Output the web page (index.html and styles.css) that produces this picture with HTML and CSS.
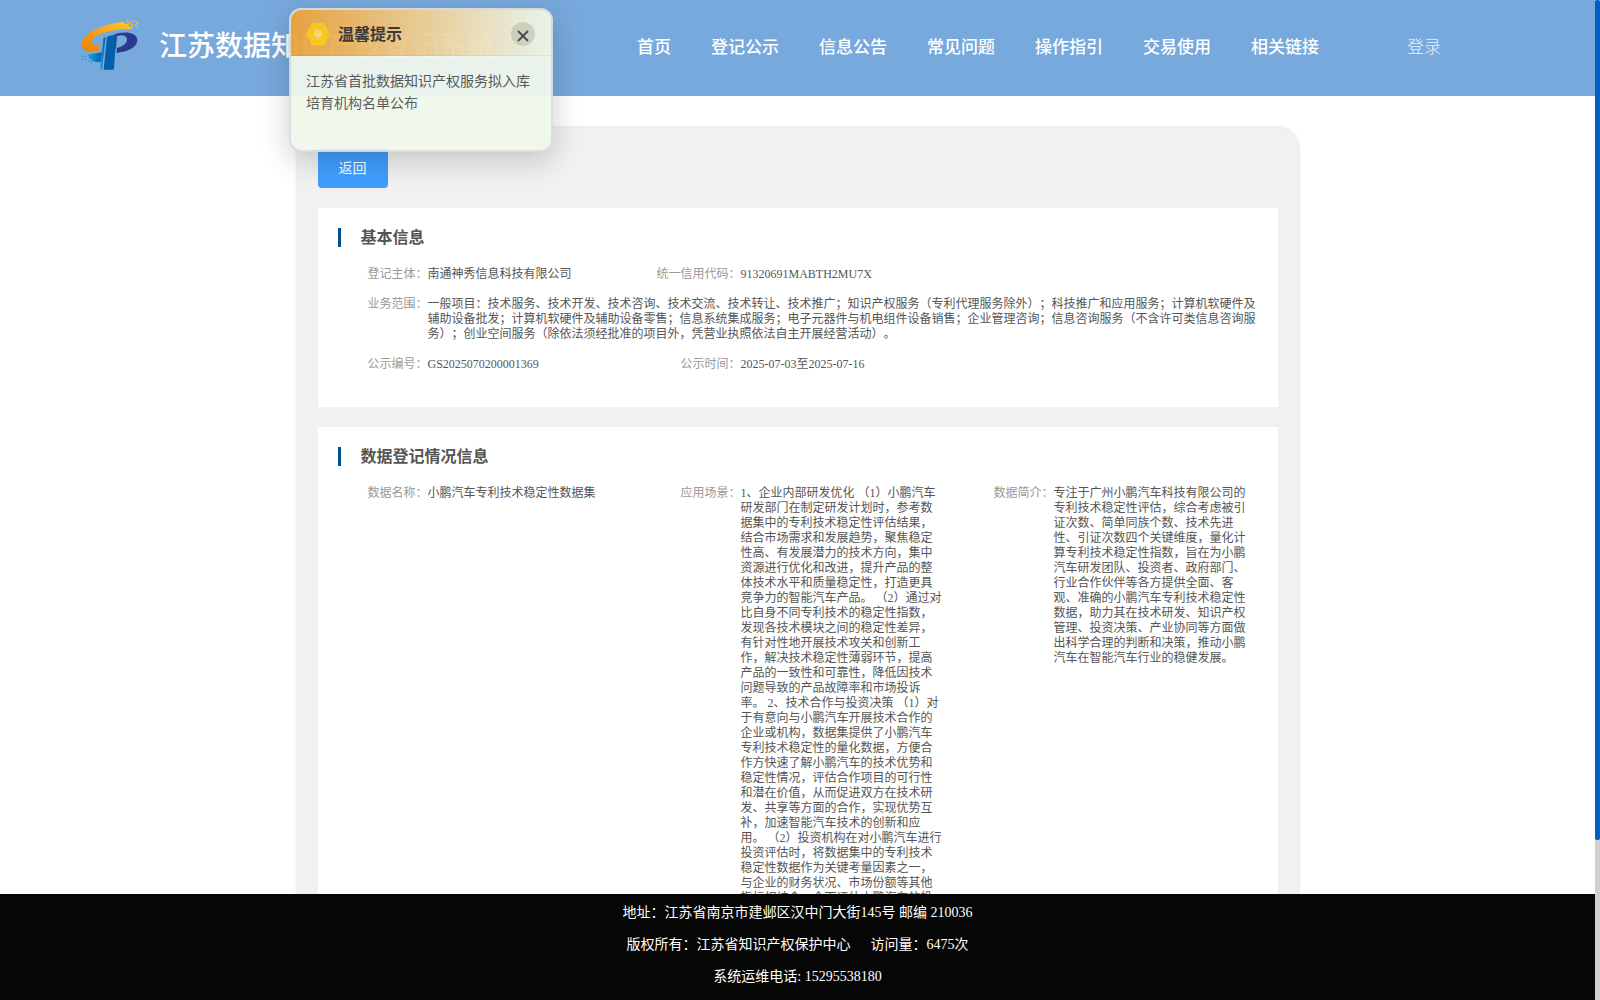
FILE: index.html
```html
<!DOCTYPE html>
<html lang="zh-CN">
<head>
  <meta charset="UTF-8">
  <meta name="viewport" content="width=device-width, initial-scale=1.0">
  <title>江苏数据知识产权登记系统</title>
  <link rel="stylesheet" href="styles.css">
</head>
<body>

  <div class="page">
    <header class="header">
      <svg class="logo" viewBox="60 54 180 162">
        <defs>
          <linearGradient id="orange" x1="0" y1="1" x2="1" y2="0">
            <stop offset="0" stop-color="#f07d00"/>
            <stop offset="1" stop-color="#fdc82f"/>
          </linearGradient>
          <linearGradient id="blue" x1="0" y1="0" x2="1" y2="0">
            <stop offset="0" stop-color="#1ea0dc"/>
            <stop offset="1" stop-color="#0560ac"/>
          </linearGradient>
        </defs>
        <path fill="url(#orange)" d="M190 65 C140 70 66 96 65 134 C65 152 88 158 115 153 L122 132 C110 138 96 136 95 126 C96 106 145 88 214 87 L219 80 L204 78 L208 71 L194 71 Z"/>
        <path fill="#fbc02d" d="M200 61h6v4h-6zM210 65h6v4h-6zM220 62h5v4h-5zM229 66h6v5h-6zM213 72h6v4h-6zM224 74h6v4h-6zM229 80h5v4h-5zM205 69h5v4h-5z"/>
        <path fill="#2b3990" d="M160 105 C190 92 232 96 232 121 C231 142 205 156 169 159 L171 144 C190 139 202 129 201 117 C199 104 182 104 171 108 L168 145 L162 150 Z"/>
        <path fill="url(#blue)" d="M130 113 L120 207 L126 209 L137 112 Z"/>
        <path fill="#0560ac" d="M141 111 C152 106 160 104 169 106 L162 206 Q161 209 157 209 L131 209 Z"/>
        <path fill="url(#blue)" d="M126 157 L81 164 L88 170 L84 175 L96 177 L91 182 L105 183 L102 187 L122 186 Z"/>
        <path fill="#1ea0dc" d="M63 166h5v4h-5zM71 168h6v4h-6zM64 175h5v4h-5zM74 177h6v4h-6zM84 182h6v4h-6zM93 185h5v4h-5z"/>
      </svg>
      <div class="site-name">江苏数据知识产权登记系统</div>
      <nav class="nav">
        <a>首页</a>
        <a>登记公示</a>
        <a>信息公告</a>
        <a>常见问题</a>
        <a>操作指引</a>
        <a>交易使用</a>
        <a>相关链接</a>
      </nav>
      <a class="login">登录</a>
    </header>

    <main class="main">
      <div class="panel">
        <button class="back">返回</button>

        <section class="card">
          <h2>基本信息</h2>
          <div class="row">
            <div class="label">登记主体：</div>
            <div class="value">南通神秀信息科技有限公司</div>
            <div class="label">统一信用代码：</div>
            <div class="value">91320691MABTH2MU7X</div>
          </div>
          <div class="row">
            <div class="label">业务范围：</div>
            <div class="value wide">一般项目：技术服务、技术开发、技术咨询、技术交流、技术转让、技术推广；知识产权服务（专利代理服务除外）；科技推广和应用服务；计算机软硬件及
辅助设备批发；计算机软硬件及辅助设备零售；信息系统集成服务；电子元器件与机电组件设备销售；企业管理咨询；信息咨询服务（不含许可类信息咨询服
务）；创业空间服务（除依法须经批准的项目外，凭营业执照依法自主开展经营活动）。</div>
          </div>
          <div class="row">
            <div class="label">公示编号：</div>
            <div class="value">GS2025070200001369</div>
            <div class="label">公示时间：</div>
            <div class="value">2025-07-03至2025-07-16</div>
          </div>
        </section>

        <section class="card">
          <h2>数据登记情况信息</h2>
          <div class="row">
            <div class="label">数据名称：</div>
            <div class="value">小鹏汽车专利技术稳定性数据集</div>
            <div class="label">应用场景：</div>
            <div class="value">1、企业内部研发优化 （1）小鹏汽车
研发部门在制定研发计划时，参考数
据集中的专利技术稳定性评估结果，
结合市场需求和发展趋势，聚焦稳定
性高、有发展潜力的技术方向，集中
资源进行优化和改进，提升产品的整
体技术水平和质量稳定性，打造更具
竞争力的智能汽车产品。 （2）通过对
比自身不同专利技术的稳定性指数，
发现各技术模块之间的稳定性差异，
有针对性地开展技术攻关和创新工
作，解决技术稳定性薄弱环节，提高
产品的一致性和可靠性，降低因技术
问题导致的产品故障率和市场投诉
率。 2、技术合作与投资决策 （1）对
于有意向与小鹏汽车开展技术合作的
企业或机构，数据集提供了小鹏汽车
专利技术稳定性的量化数据，方便合
作方快速了解小鹏汽车的技术优势和
稳定性情况，评估合作项目的可行性
和潜在价值，从而促进双方在技术研
发、共享等方面的合作，实现优势互
补，加速智能汽车技术的创新和应
用。 （2）投资机构在对小鹏汽车进行
投资评估时，将数据集中的专利技术
稳定性数据作为关键考量因素之一，
与企业的财务状况、市场份额等其他
指标相结合，全面评估小鹏汽车的投</div>
            <div class="label">数据简介：</div>
            <div class="value">专注于广州小鹏汽车科技有限公司的
专利技术稳定性评估，综合考虑被引
证次数、简单同族个数、技术先进
性、引证次数四个关键维度，量化计
算专利技术稳定性指数，旨在为小鹏
汽车研发团队、投资者、政府部门、
行业合作伙伴等各方提供全面、客
观、准确的小鹏汽车专利技术稳定性
数据，助力其在技术研发、知识产权
管理、投资决策、产业协同等方面做
出科学合理的判断和决策，推动小鹏
汽车在智能汽车行业的稳健发展。</div>
          </div>
        </section>
      </div>
    </main>

    <footer class="footer">
      <p>地址：江苏省南京市建邺区汉中门大街145号 邮编 210036</p>
      <p>版权所有：江苏省知识产权保护中心<span class="visits">访问量：6475次</span></p>
      <p>系统运维电话: 15295538180</p>
    </footer>
  </div>

  <div class="scroll-track">
    <div class="scroll-thumb"></div>
  </div>

  <div class="notice">
    <div class="notice-head">
      <svg class="notice-icon" viewBox="0 0 24 22">
        <path fill="#fcc814" d="M6 0h12l6 11-6 11H6L0 11z"/>
        <circle cx="12" cy="10.5" r="3.3" fill="#fbd24a" stroke="#fde894"/>
        <path d="M10.5 10l1.5 1.2 1.5-1.2M12 11v3M10.5 15.5h3" fill="none" stroke="#fde894" stroke-width=".8"/>
      </svg>
      <span class="notice-title">温馨提示</span>
      <span class="notice-close">
        <svg viewBox="0 0 12 12"><path d="M1 1l10 10M11 1L1 11" stroke="#444" stroke-width="1.8"/></svg>
      </span>
    </div>
    <div class="notice-body">江苏省首批数据知识产权服务拟入库培育机构名单公布</div>
  </div>

</body>
</html>
```
FILE: styles.css
```css
* {
  box-sizing: border-box;
}

body {
  margin: 0;
  height: 1000px;
  overflow: hidden;
  display: grid;
  grid-template-columns: 1fr 5px;
  font-family: "Liberation Serif", "Noto Sans CJK SC", serif;
  font-size: 14px;
  color: #555;
  background: #fff;
  text-spacing-trim: space-all;
}

.page {
  display: grid;
  grid-template-rows: 96px minmax(0, 1fr) 106px;
  height: 1000px;
  min-width: 0;
}

/* header */
.header {
  display: flex;
  align-items: center;
  padding-left: 80px;
  background: #78a9dd;
  color: #fff;
}

.logo {
  width: 60px;
  height: 54px;
  margin-top: -6px;
}

.site-name {
  width: 478px;
  margin: -3px 0 0 19px;
  font-size: 28px;
  line-height: 40px;
  font-weight: 500;
  white-space: nowrap;
}

.nav {
  display: flex;
  gap: 40px;
  font-size: 17px;
  line-height: 24px;
  font-weight: 500;
  margin-top: -1px;
  white-space: nowrap;
}

.login {
  margin: -1px 0 0 88px;
  font-size: 17px;
  line-height: 24px;
  font-weight: 300;
  opacity: 0.85;
}

/* content */
.main {
  overflow: hidden;
  padding-top: 32px;
}

.panel {
  width: 1000px;
  margin: 0 auto;
  padding: 20px;
  background: #f1f1f1;
  border-radius: 20px;
  box-shadow: 0 0 4px rgba(0, 0, 0, 0.18);
}

.back {
  display: block;
  width: 70px;
  height: 40px;
  padding: 0 0 2px;
  border: none;
  border-radius: 4px;
  background: #409eff;
  color: #fff;
  font-family: inherit;
  font-size: 14px;
}

.card {
  margin-top: 20px;
  padding: 20px;
  background: #fff;
}

.card h2 {
  margin: 0 0 20px;
  padding-left: 20px;
  border-left: 3px solid #00508e;
  font-size: 16px;
  line-height: 19px;
  font-weight: bold;
}

.row {
  display: grid;
  grid-template-columns: 90px 223px 90px 223px 90px 204px;
  margin-bottom: 15px;
  font-size: 12px;
  line-height: 15px;
}

.label {
  color: #999;
  text-align: right;
}

.value {
  white-space: pre;
}

.value.wide {
  grid-column: 2 / -1;
}

/* footer */
.footer {
  padding-top: 3px;
  background: #060606;
  color: #fff;
  text-align: center;
}

.footer p {
  margin: 0;
  line-height: 32px;
}

.visits {
  margin-left: 20px;
}

.scroll-track {
  background: #d0d0d0;
}

.scroll-thumb {
  height: 840px;
  border-radius: 2px;
  background: #005dc5;
}

/* floating notice */
.notice {
  position: absolute;
  top: 8px;
  left: 289px;
  width: 264px;
  height: 144px;
  border: 2px solid #dcdcdc;
  border-radius: 12px;
  overflow: hidden;
  background: #f0f8ec;
  opacity: 0.95;
  box-shadow: 0 8px 30px rgba(0, 0, 0, 0.2);
}

.notice-head {
  display: flex;
  align-items: center;
  height: 46px;
  padding: 3px 16px 0 15px;
  border-bottom: 1px solid rgba(0, 0, 0, 0.05);
  background: linear-gradient(90deg, #eba238, #f0f8ec);
}

.notice-icon {
  width: 24px;
  height: 22px;
}

.notice-title {
  flex: 1;
  margin: 2px 0 0 8px;
  font-size: 16px;
  line-height: 22px;
  font-weight: bold;
  color: #333;
}

.notice-close {
  display: flex;
  align-items: center;
  justify-content: center;
  width: 24px;
  height: 24px;
  border-radius: 50%;
  background: rgba(0, 0, 0, 0.12);
}

.notice-close svg {
  width: 12px;
  height: 12px;
  margin-top: 3px;
}

.notice-body {
  padding: 15px;
  line-height: 22px;
}
```
